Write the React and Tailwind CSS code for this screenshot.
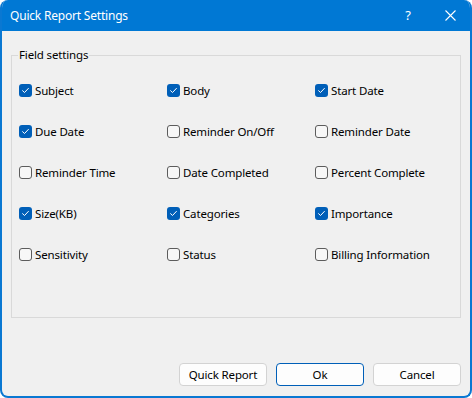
import React from "react";

const fields = [
  ["Subject", true], ["Body", true], ["Start Date", true],
  ["Due Date", true], ["Reminder On/Off", false], ["Reminder Date", false],
  ["Reminder Time", false], ["Date Completed", false], ["Percent Complete", false],
  ["Size(KB)", true], ["Categories", true], ["Importance", true],
  ["Sensitivity", false], ["Status", false], ["Billing Information", false],
];

function Box({ checked }) {
  if (checked) {
    return (
      <span className="flex h-[13px] w-[13px] shrink-0 items-center justify-center rounded-[3px] bg-[#005fb8]">
        <svg width="9" height="9" viewBox="0 0 9 9" fill="none">
          <path d="M1.6 4.7 L3.5 6.5 L7.4 2.4" stroke="white" strokeWidth="1" strokeLinecap="round" strokeLinejoin="round" />
        </svg>
      </span>
    );
  }
  return <span className="block h-[13px] w-[13px] shrink-0 rounded-[3px] border border-[#5c5c5c] bg-[#f7f7f7]" />;
}

export default function App() {
  return (
    <div className="h-[398px] w-[472px] bg-white" style={{ fontFamily: '"Segoe UI", "Noto Sans", "Open Sans", sans-serif' }}>
      <div className="flex h-full w-full flex-col overflow-hidden rounded-[8px] border-2 border-t-0 border-[#0a78d2] bg-[#f0f0f0]">
        <div className="flex h-[31px] shrink-0 items-center bg-[#0078d4] pl-[8px] text-white">
          <span className="text-[12px] tracking-[-0.2px]">Quick Report Settings</span>
          <span className="ml-auto mr-[34px] text-[13px]">?</span>
          <svg className="mr-[14px]" width="11" height="11" viewBox="0 0 11 11" fill="none">
            <path d="M0.5 0.5 L10.5 10.5 M10.5 0.5 L0.5 10.5" stroke="white" strokeWidth="1.1" />
          </svg>
        </div>
        <div className="flex flex-1 flex-col px-[9px] pt-[24px] pb-[10px]">
          <div className="relative h-[263px] border border-[#d9d9d9]">
            <span className="absolute left-[6px] top-[-9px] bg-[#f0f0f0] px-[1px] text-[11.5px] leading-[16px] tracking-[-0.15px] text-black">Field settings</span>
            <div className="grid grid-cols-[148px_148px_148px] pl-[7px] pt-[14px]">
              {fields.map(([label, checked]) => (
                <div key={label} className="flex h-[41px] items-center gap-[3px] text-[11.5px] tracking-[-0.15px] text-black">
                  <Box checked={checked} />
                  <span>{label}</span>
                </div>
              ))}
            </div>
          </div>
          <div className="mt-auto flex justify-end gap-[9px]">
            <button className="h-[23px] w-[88px] rounded-[4px] border border-[#d3d3d3] bg-[#fdfdfd] text-[11.5px] tracking-[-0.15px] text-black">Quick Report</button>
            <button className="h-[23px] w-[88px] rounded-[4px] border border-[#005fb8] bg-[#fdfdfd] text-[11.5px] text-black">Ok</button>
            <button className="h-[23px] w-[88px] rounded-[4px] border border-[#d3d3d3] bg-[#fdfdfd] text-[11.5px] tracking-[-0.15px] text-black">Cancel</button>
          </div>
        </div>
      </div>
    </div>
  );
}
